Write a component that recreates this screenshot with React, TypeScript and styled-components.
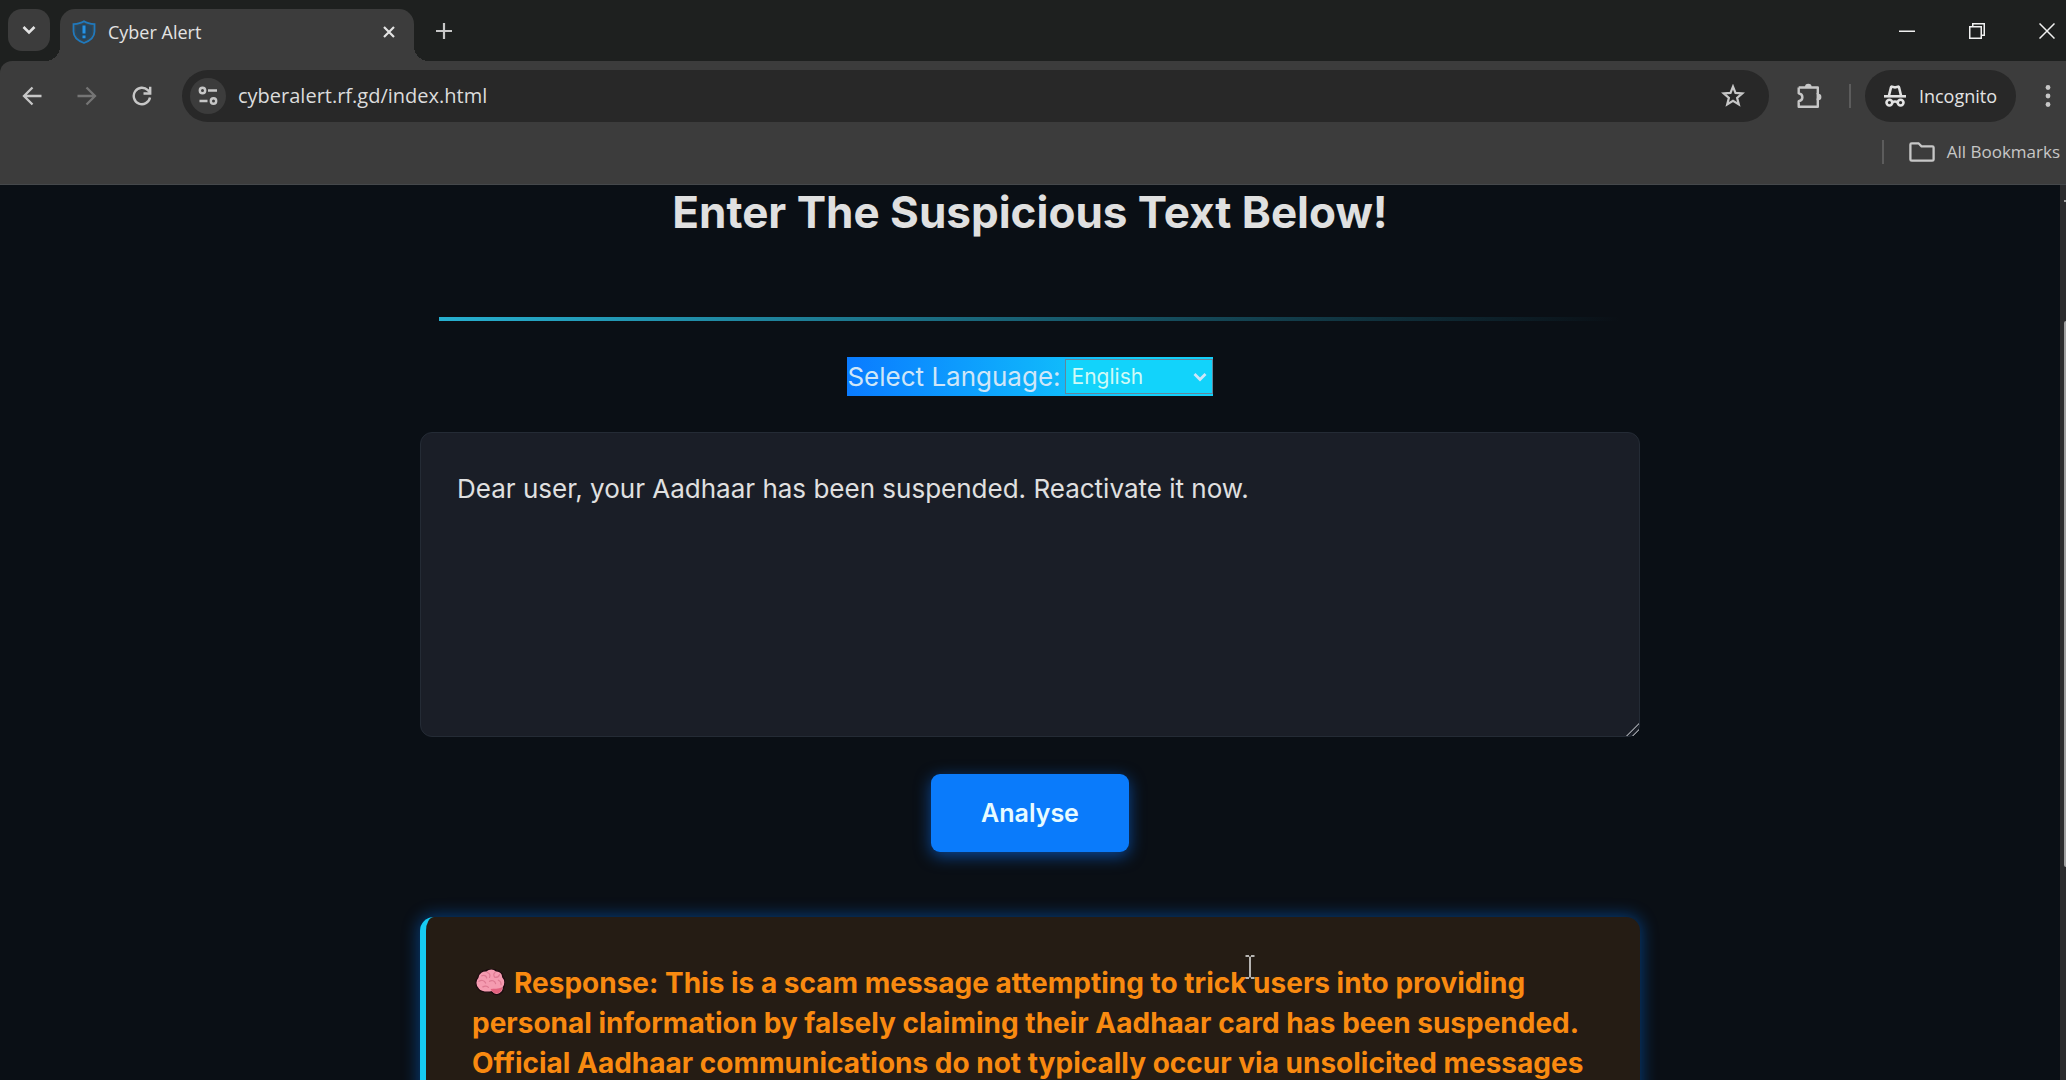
import React, { useState } from "react";
import styled, { createGlobalStyle } from "styled-components";

const GlobalStyle = createGlobalStyle`
  *, *::before, *::after { box-sizing: border-box; }
  html, body { margin: 0; height: 100%; overflow: hidden; background: #0a0f15; }
  #root { height: 100%; }
  button, input, select, textarea { font-family: inherit; margin: 0; }
`;

const chromeFont = `"Open Sans", "Noto Sans", sans-serif`;
const pageFont = `Inter, "Liberation Sans", sans-serif`;

const Window = styled.div`
  display: flex;
  flex-direction: column;
  height: 100vh;
  background: #0a0f15;
`;

/* ---------- Browser frame ---------- */

const Frame = styled.header`
  flex: none;
  background: #1e201f;
  font-family: ${chromeFont};
  color: #e3e3e3;
`;

const TabStrip = styled.div`
  display: flex;
  align-items: flex-start;
  height: 61px;
  padding: 9px 11px 0 8px;
`;

const IconButton = styled.button<{ $size?: number; $tone?: string }>`
  display: flex;
  flex: none;
  align-items: center;
  justify-content: center;
  width: ${(p) => p.$size ?? 36}px;
  height: ${(p) => p.$size ?? 36}px;
  padding: 0;
  border: 0;
  border-radius: 50%;
  background: transparent;
  color: ${(p) => p.$tone ?? "#c7c7c7"};
`;

const TabSearch = styled(IconButton)`
  border-radius: 14px;
  background: #3c3c3c;
  color: #e3e3e3;
`;

const Tab = styled.div`
  position: relative;
  display: flex;
  align-items: center;
  gap: 12px;
  width: 354px;
  height: 52px;
  margin-left: 10px;
  padding: 0 8px 6px 12px;
  border-radius: 15px 15px 0 0;
  background: #3c3c3c;

  &::before,
  &::after {
    content: "";
    position: absolute;
    bottom: 0;
    width: 15px;
    height: 15px;
  }
  &::before {
    right: 100%;
    background: radial-gradient(circle at 0 0, transparent 15px, #3c3c3c 15px);
  }
  &::after {
    left: 100%;
    background: radial-gradient(circle at 100% 0, transparent 15px, #3c3c3c 15px);
  }
`;

const TabTitle = styled.span`
  flex: 1;
  font-size: 18px;
  line-height: 24px;
`;

const NewTab = styled(IconButton)`
  margin: 4px 0 0 12px;
`;

const WindowControls = styled.div`
  display: flex;
  gap: 54px;
  margin: 14px 0 0 auto;
`;

const Toolbar = styled.div`
  display: flex;
  align-items: center;
  padding: 9px 0 9px 14px;
  border-top-left-radius: 12px;
  background: #3c3c3c;
`;

const NavGroup = styled.nav`
  display: flex;
  gap: 19px;
  margin-right: 22px;
`;

const Omnibox = styled.div`
  display: flex;
  flex: 1;
  align-items: center;
  height: 52px;
  padding: 0 18px 0 8px;
  border-radius: 26px;
  background: #282828;
`;

const SiteInfo = styled(IconButton)`
  background: #3c3c3c;
`;

const Address = styled.input`
  flex: 1;
  min-width: 0;
  padding: 0 0 0 12px;
  border: 0;
  outline: 0;
  background: transparent;
  color: #dcdcdc;
  font-size: 20px;
  line-height: 28px;
`;

const Actions = styled.div`
  display: flex;
  align-items: center;
  gap: 22px;
  margin-left: 22px;
`;

const Rule = styled.span`
  width: 2px;
  height: 24px;
  background: #5c5c5c;
`;

const ProfileArea = styled.div`
  display: flex;
  align-items: center;
  gap: 14px;
`;

const Incognito = styled.button`
  display: flex;
  align-items: center;
  gap: 13px;
  height: 52px;
  padding: 0 19px;
  border: 0;
  border-radius: 26px;
  background: #282828;
  color: #e3e3e3;
  font-size: 18px;
  line-height: 24px;
`;

const Bookmarks = styled.div`
  display: flex;
  align-items: center;
  justify-content: flex-end;
  height: 54px;
  padding: 0 6px 11px 0;
  border-bottom: 1px solid #45484b;
  background: #3c3c3c;
`;

const BookmarksFolder = styled.button`
  display: flex;
  align-items: center;
  gap: 12px;
  margin-left: 25px;
  padding: 0;
  border: 0;
  background: transparent;
  color: #c7c7c7;
  font-size: 17px;
  line-height: 24px;
`;

/* ---------- Page ---------- */

const Viewport = styled.div`
  display: flex;
  flex: 1;
  min-height: 0;
`;

const Page = styled.main`
  flex: 1;
  overflow: hidden;
  font-family: ${pageFont};
  color: #e0e0e0;
`;

const Content = styled.div`
  display: flex;
  flex-direction: column;
  align-items: center;
  width: 100%;
  max-width: 1220px;
  margin: 0 auto;
`;

const Heading = styled.h1`
  margin: 0;
  font-size: 44px;
  font-weight: 700;
  line-height: 54px;
`;

const Divider = styled.hr`
  width: calc(100% - 38px);
  height: 4px;
  margin: 78px 0 36px;
  border: 0;
  background: linear-gradient(90deg, #27b0d0, transparent);
`;

const LanguageLabel = styled.label`
  display: flex;
  align-items: center;
  gap: 4px;
  height: 39px;
  background: linear-gradient(90deg, #0a7bff, #12d0fa 80%);
  color: #cfe6f8;
  font-size: 26px;
  line-height: 36px;
`;

const SelectWrap = styled.span`
  position: relative;
  display: flex;

  svg {
    position: absolute;
    top: 11px;
    right: 6px;
    pointer-events: none;
  }
`;

const LanguageSelect = styled.select`
  width: 148px;
  height: 35px;
  padding: 0 24px 0 6px;
  border: 1px solid #64859a;
  border-radius: 0;
  appearance: none;
  background: #12d3fb;
  color: #cffaf6;
  font-size: 21px;
`;

const Message = styled.textarea`
  width: 100%;
  height: 305px;
  margin-top: 36px;
  padding: 36px;
  border: 1px solid #242b35;
  border-radius: 12px;
  outline: 0;
  resize: both;
  background: #1a1e27;
  color: #e0e0e0;
  font-size: 26px;
  line-height: 40px;

  &::-webkit-resizer {
    background: linear-gradient(
      135deg,
      transparent 56%, #90949a 57%, #90949a 61%, transparent 62%,
      transparent 76%, #90949a 77%, #90949a 81%, transparent 82%
    );
  }
`;

const AnalyseButton = styled.button`
  height: 78px;
  margin-top: 37px;
  padding: 0 50px;
  border: 0;
  border-radius: 9px;
  background: #0a7bfb;
  box-shadow: 0 4px 16px rgba(10, 110, 240, 0.6);
  color: #e8fbff;
  font-size: 25px;
  font-weight: 600;
  line-height: 36px;
`;

const Result = styled.section`
  width: 100%;
  min-height: 320px;
  margin-top: 65px;
  padding: 46px 40px 46px 46px;
  border-left: 6px solid #16cbf2;
  border-radius: 14px;
  background: #251c14;
  box-shadow: 0 0 16px 2px rgba(0, 110, 230, 0.45);
  color: #f98a10;
  font-size: 28px;
  font-weight: 700;
  line-height: 40px;

  p { margin: 0; }
  svg { margin: 0 9px 0 2px; vertical-align: -4px; }
`;

const ScrollTrack = styled.div`
  display: flex;
  flex: none;
  flex-direction: column;
  align-items: flex-end;
  width: 6px;
  padding-top: 15px;
  background: #2b2b2d;
`;

const ScrollArrow = styled.span`
  width: 2px;
  height: 2px;
  background: #9f9f9f;
`;

const ScrollThumb = styled.span`
  width: 2px;
  height: 62%;
  margin-top: 119px;
  border-radius: 2px 0 0 2px;
  background: #9f9f9f;
`;

const TextCursor = styled.svg`
  position: absolute;
  top: 955px;
  left: 1245px;
  pointer-events: none;
`;

/* ---------- Icons ---------- */

type IconProps = { w: number; h?: number; box: string; sw?: number; children: React.ReactNode };

const Icon = ({ w, h, box, sw = 2, children }: IconProps) => (
  <svg width={w} height={h ?? w} viewBox={box} fill="none" stroke="currentColor" strokeWidth={sw} aria-hidden="true">
    {children}
  </svg>
);

const ShieldIcon = () => (
  <Icon w={24} box="0 0 24 24" sw={1.8}>
    <path d="M12 1.200c2.800 1.800 6.500 2.600 10.500 2.900v7.400c0 5.300-4.200 9.200-10.500 11.500C5.700 20.700 1.500 16.800 1.500 11.500V4.100C5.500 3.800 9.200 3 12 1.200z" stroke="#2079bd" fill="#38464f" />
    <path d="M12 4c2.300 1.200 5 1.900 8 2.100v5.400c0 4-3 7-8 8.900-5-1.900-8-4.900-8-8.900V6.100C7 5.900 9.700 5.200 12 4z" stroke="none" fill="#25445c" />
    <path d="M12 5.500v8M12 15.500v2.800" stroke="#2492e6" strokeWidth="3" />
  </Icon>
);

const Brain = () => (
  <svg width="31" height="28" viewBox="0 2 28 25" aria-hidden="true">
    <path
      d="M4 20C.8 17 1 12 3.500 9.500 4 5.500 8 3 11 3.500c2.500-2.500 7-2.500 9 0 3.500-.3 6 2.500 6 5.500 2.500 2.500 2.500 7 .5 9.500.5 3-2.500 6.500-6 6.500-2 0-3.500-1-4.500-2.500C12 23 6.500 23 4 20z"
      fill="#f59bb0" stroke="#1c0a0e" strokeWidth="1.200"
    />
    <path d="M15 20c1 2.500 3 4 5.200 4 3 0 5.300-2.500 5.300-5.700C22 20 18 19.500 15 20z" fill="#e2617f" />
    <path
      d="M7 8c2-1 4 0 4.500 2M4.500 13c2-1.500 5-1 6 1.500M12 5c2 .5 3 2.500 2 4.500M19 5c-1.500 1-1.500 3 0 4.500 2 0 3.500-1 4-2.500M14 13c2-1.500 5-.5 5.500 2M22 12c1.500.5 2.500 2 2.500 4M8 18c1.500-1 4-1 5 .5"
      fill="none" stroke="#de7a92" strokeWidth="1.100" strokeLinecap="round"
    />
  </svg>
);

export default function App() {
  const [url, setUrl] = useState("cyberalert.rf.gd/index.html");
  const [language, setLanguage] = useState("English");
  const [message, setMessage] = useState("Dear user, your Aadhaar has been suspended. Reactivate it now.");

  return (
    <Window>
      <GlobalStyle />
      <Frame>
        <TabStrip>
          <TabSearch $size={42} aria-label="Search tabs">
            <Icon w={14} box="0 0 14 14" sw={2.6}><path d="m1.500 4 5.500 5.500L12.500 4" /></Icon>
          </TabSearch>
          <Tab>
            <ShieldIcon />
            <TabTitle>Cyber Alert</TabTitle>
            <IconButton $size={34} $tone="#e3e3e3" aria-label="Close tab">
              <Icon w={12} box="0 0 12 12" sw={2.2}><path d="m1 1 10 10M11 1 1 11" /></Icon>
            </IconButton>
          </Tab>
          <NewTab aria-label="New tab">
            <Icon w={16} box="0 0 16 16" sw={2.2}><path d="M8 0v16M0 8h16" /></Icon>
          </NewTab>
          <WindowControls>
            <IconButton $size={16} $tone="#f0f0f0" aria-label="Minimize">
              <Icon w={16} box="0 0 16 16" sw={1.5}><path d="M0 8.250h16" /></Icon>
            </IconButton>
            <IconButton $size={16} $tone="#f0f0f0" aria-label="Restore">
              <Icon w={16} box="0 0 16 16" sw={1.5}><path d="M.75 3.750h11.500v11.500H.75zM3.750 3.500V.75h11.500v11.500H12.500" /></Icon>
            </IconButton>
            <IconButton $size={16} $tone="#f0f0f0" aria-label="Close window">
              <Icon w={16} box="0 0 16 16" sw={1.5}><path d="m.5.5 15 15M15.500.5l-15 15" /></Icon>
            </IconButton>
          </WindowControls>
        </TabStrip>

        <Toolbar>
          <NavGroup>
            <IconButton aria-label="Back">
              <Icon w={20} box="0 0 20 20" sw={2.3}><path d="M19.500 10H2M10.500 1.500 2 10l8.500 8.500" /></Icon>
            </IconButton>
            <IconButton $tone="#757575" aria-label="Forward">
              <Icon w={20} box="0 0 20 20" sw={2.3}><path d="M.5 10H18M9.500 1.500 18 10l-8.500 8.500" /></Icon>
            </IconButton>
            <IconButton aria-label="Reload">
              <Icon w={20} box="0 0 20 20" sw={2.4}>
                <path d="M18 11.500A8.200 8.200 0 1 1 15.800 4.200L18 6.500" />
                <path d="M18.200.8v6.700h-6.700" />
              </Icon>
            </IconButton>
          </NavGroup>
          <Omnibox>
            <SiteInfo aria-label="View site information">
              <Icon w={20} box="0 0 20 20" sw={2.4}>
                <circle cx="4.500" cy="4.500" r="2.700" /><path d="M10 4.500h9M1.500 15h8" /><circle cx="15.500" cy="15" r="2.700" />
              </Icon>
            </SiteInfo>
            <Address aria-label="Address" value={url} onChange={(e) => setUrl(e.target.value)} />
            <IconButton aria-label="Bookmark this tab">
              <Icon w={24} box="0 0 24 24" sw={2.2}>
                <path d="m12 2.600 2.500 6.300 6.800.5-5.200 4.400 1.700 6.700L12 16.900l-5.800 3.600 1.700-6.700-5.200-4.400 6.800-.5z" />
              </Icon>
            </IconButton>
          </Omnibox>
          <Actions>
            <IconButton aria-label="Extensions">
              <Icon w={26} box="0 0 26 26" sw={2.4}>
                <path d="M2.700 4.500h19.100v6.800M21.800 15.500v8.300H2.700v-5.600c2.200-.4 3.700-1.900 3.700-4s-1.500-3.600-3.700-4V4.500" strokeLinejoin="round" />
                <path d="M21.800 10v7.200" />
                <path d="M9 4a3.300 3.300 0 0 1 6.600 0zM22.200 10.800a3.200 3.200 0 0 1 0 6.400z" fill="currentColor" stroke="none" />
              </Icon>
            </IconButton>
            <ProfileArea>
              <Rule />
              <Incognito>
                <Icon w={22} box="0 0 22 22" sw={2.6}>
                  <path d="M0 11.300h22" />
                  <path d="m5 10.500 2-8.200c.2-.7.700-.8 1.300-.6L11 2.500l2.700-.8c.6-.2 1.100-.1 1.300.6l2 8.200" />
                  <circle cx="5.400" cy="17.600" r="2.900" /><circle cx="16.600" cy="17.600" r="2.900" /><path d="M8.300 17.300c1.500-.9 3.900-.9 5.400 0" />
                </Icon>
                Incognito
              </Incognito>
              <IconButton aria-label="Menu">
                <Icon w={6} h={22} box="0 0 6 22">
                  <g fill="currentColor" stroke="none"><circle cx="3" cy="2.500" r="2.400" /><circle cx="3" cy="11" r="2.400" /><circle cx="3" cy="19.500" r="2.400" /></g>
                </Icon>
              </IconButton>
            </ProfileArea>
          </Actions>
        </Toolbar>

        <Bookmarks>
          <Rule />
          <BookmarksFolder>
            <Icon w={26} h={20} box="0 0 26 20" sw={2.3}>
              <path d="M2.700 1.300h6.800l3 3h10.800c.8 0 1.300.5 1.300 1.300v11.800c0 .8-.5 1.300-1.300 1.300H2.700c-.8 0-1.300-.5-1.300-1.300V2.600c0-.8.5-1.300 1.300-1.300z" />
            </Icon>
            All Bookmarks
          </BookmarksFolder>
        </Bookmarks>
      </Frame>

      <Viewport>
        <Page>
          <Content>
            <Heading>Enter The Suspicious Text Below!</Heading>
            <Divider />
            <LanguageLabel>
              Select Language:
              <SelectWrap>
                <LanguageSelect value={language} onChange={(e) => setLanguage(e.target.value)}>
                  <option>English</option>
                </LanguageSelect>
                <Icon w={14} box="0 0 14 14" sw={2.8}><path d="m1.500 4 5.500 5.500L12.500 4" /></Icon>
              </SelectWrap>
            </LanguageLabel>
            <Message
              aria-label="Suspicious text"
              spellCheck={false}
              value={message}
              onChange={(e) => setMessage(e.target.value)}
            />
            <AnalyseButton>Analyse</AnalyseButton>
            <Result>
              <p>
                <Brain />
                Response: This is a scam message attempting to trick users into providing personal
                information by falsely claiming their Aadhaar card has been suspended. Official
                Aadhaar communications do not typically occur via unsolicited messages
              </p>
            </Result>
          </Content>
        </Page>
        <ScrollTrack aria-hidden="true">
          <ScrollArrow />
          <ScrollThumb />
        </ScrollTrack>
      </Viewport>

      <TextCursor width="10" height="24" viewBox="0 0 10 24" fill="none" stroke="#e6e6e6" strokeWidth="1.500" aria-hidden="true">
        <path d="M.5 1H4M6 1h3.500M5 1.500v21M.5 23H4M6 23h3.500" />
      </TextCursor>
    </Window>
  );
}
